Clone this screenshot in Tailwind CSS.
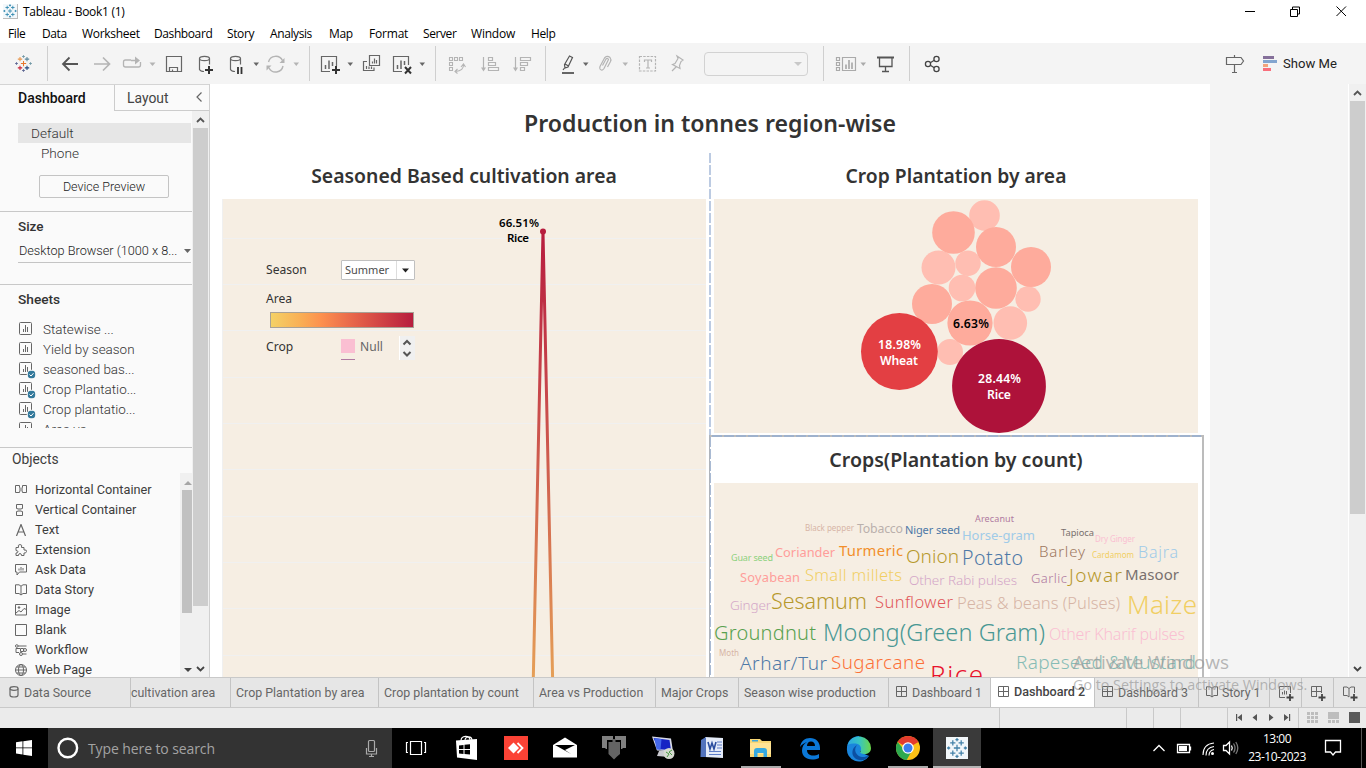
<!DOCTYPE html>
<html lang="en">
<head>
<meta charset="utf-8">
<title>Tableau - Book1 (1)</title>
<script src="https://cdn.jsdelivr.net/npm/@tailwindcss/browser@4"></script>
</head>
<body class="w-[1366px] h-[768px] overflow-hidden bg-white relative font-['Roboto',sans-serif] text-[#4b4b4b] whitespace-nowrap">
<svg class="hidden">
  <symbol id="tableau" viewBox="0 0 24 24"><g fill="none" stroke-width="1.2">
    <path d="M12 9v6M9 12h6" stroke="var(--c1,#e8762d)"/><path d="M8 4.500v5M5.500 7h5" stroke="var(--c2,#e8974e)"/><path d="M16 4.500v5M13.500 7h5" stroke="var(--c3,#5b879b)"/><path d="M8 14.500v5M5.500 17h5" stroke="var(--c4,#c72035)"/><path d="M16 14.500v5M13.500 17h5" stroke="var(--c5,#1f447e)"/><path d="M12 2.500v3M10.500 4h3M20 10.500v3M18.500 12h3" stroke="var(--c6,#7199a6)"/><path d="M12 18.500v3M10.500 20h3M4 10.500v3M2.500 12h3" stroke="var(--c7,#5c6692)"/></g></symbol>
  <symbol id="sheet" viewBox="0 0 16 16"><rect x="1.500" y="1.500" width="12" height="12" rx="1" fill="none" stroke="#666" /><path d="M5.500 11V8M7.500 11V4M9.500 11V6" stroke="#666" fill="none"/></symbol>
  <symbol id="check" viewBox="0 0 8 8"><circle cx="4" cy="4" r="3.900" fill="#33799b"/><path d="M2 4l1.500 1.500L6 2.700" stroke="#fff" fill="none"/></symbol>
  <symbol id="grid4" viewBox="0 0 12 12"><path d="M.5.500h10v10H.5zM5.500.500v10M.5 5.500h10" fill="none" stroke="#666"/></symbol>
  <symbol id="book" viewBox="0 0 12 12"><path d="M6 2.200L4 .800H.5V9.500H4L6 11 8 9.500h3.500V.800H8L6 2.200V11" fill="none" stroke="#666"/></symbol>
</svg>

<header class="h-[23px] flex items-center pl-[3px] text-black font-['Open_Sans',sans-serif] text-[12px]">
  <div class="w-[15px] h-[15px] border-r border-b border-[#bbb] bg-[#f3f8fb]">
    <svg class="w-[14px] h-[14px] [--c1:#2d85ad] [--c2:#2d85ad] [--c3:#2d85ad] [--c4:#2d85ad] [--c5:#2d85ad] [--c6:#2d85ad] [--c7:#2d85ad]" viewBox="2 2 20 20"><use href="#tableau" width="24" height="24"/></svg>
  </div>
  <span class="ml-[5px] tracking-[-0.28px]">Tableau - Book1 (1)</span>
  <svg class="ml-auto mr-[18px] w-[104px] h-[20px]" viewBox="1244 0 104 20" fill="none" stroke="#000"><path d="M1245 9.500h10M1290.500 7.500h7v7h-7zM1292.500 7.500v-2.500h7v7h-2M1336.500 4.500l9.500 9.500M1346 4.500l-9.500 9.500"/></svg>
</header>

<nav class="h-[20px] flex items-center pl-2 text-black font-['Open_Sans',sans-serif] text-[12px] leading-[20px] tracking-[-0.4px] pt-[2px]">
  <span class="w-[34px]">File</span><span class="w-[40px]">Data</span><span class="w-[72px] tracking-[-0.3px]">Worksheet</span><span class="w-[73px]">Dashboard</span><span class="w-[43px]">Story</span><span class="w-[59px]">Analysis</span><span class="w-[40px]">Map</span><span class="w-[54px] tracking-[-0.2px]">Format</span><span class="w-[48px]">Server</span><span class="w-[60px] tracking-[-0.2px]">Window</span><span>Help</span>
</nav>

<div class="h-[41px] flex items-center bg-[#f4f4f4] overflow-hidden">
  <svg class="w-[47px] h-[41px]" viewBox="0 43 47 41"><use href="#tableau" x="13" y="53" width="21" height="21"/></svg>
  <i class="w-px h-[35px] bg-[#cfcfcf]"></i>
  <svg class="w-[40px] h-[41px]" viewBox="48 43 40 41" fill="none" stroke="#555" stroke-width="1.800"><path d="M78 64H63M69.500 57.500L63 64l6.500 6.500"/></svg>
  <svg class="w-[30px] h-[41px]" viewBox="88 43 30 41" fill="none" stroke="#b4b4b4" stroke-width="1.700"><path d="M94 64h15.500M103 57.500l6.500 6.500-6.500 6.500"/></svg>
  <svg class="w-[42px] h-[41px]" viewBox="118 43 42 41" fill="none" stroke="#b4b4b4" stroke-width="1.300"><path d="M131 60h-5.500a2 2 0 0 0-2 2v3a2 2 0 0 0 2 2h13a2 2 0 0 0 2-2v-3M131 60.500h6"/><path d="M135 56.500l5 4-5 4z" fill="#b4b4b4" stroke="none"/><path d="M149.500 62.500h6l-3 3.500z" fill="#b4b4b4" stroke="none"/></svg>
  <svg class="w-[30px] h-[41px]" viewBox="160 43 30 41" fill="none" stroke="#666" stroke-width="1.200"><path d="M166.500 56.500h15v15h-15zM169.500 71.500v-4h8v4M172.500 71.500v-2" /></svg>
  <svg class="w-[32px] h-[41px]" viewBox="190 43 32 41" fill="none" stroke="#666" stroke-width="1.200"><ellipse cx="204.500" cy="58.500" rx="5" ry="2.200"/><path d="M199.500 58.500v11q1 2 4.500 2M209.500 58.500v6"/><path d="M209 66v8M205 70h8" stroke="#333" stroke-width="2"/></svg>
  <svg class="w-[40px] h-[41px]" viewBox="222 43 40 41" fill="none" stroke="#666" stroke-width="1.200"><ellipse cx="235.500" cy="58.500" rx="5" ry="2.200"/><path d="M230.500 58.500v11q1 2 4.500 2M240.500 58.500v6"/><path d="M238 67v7M241.500 67v7" stroke="#333" stroke-width="1.800"/><path d="M253.500 62.500h5.500l-2.700 3.500z" fill="#666" stroke="none"/></svg>
  <svg class="w-[47px] h-[41px]" viewBox="262 43 47 41" fill="none" stroke="#b4b4b4" stroke-width="1.400"><path d="M268.500 62a7.500 7.500 0 0 1 14-1.500M283 66a7.500 7.500 0 0 1-14 2"/><path d="M284.500 58v5h-5zM266.500 70.500v-5h5z" fill="#b4b4b4" stroke="none"/><path d="M293.500 62.500h5.500l-2.700 3.500z" fill="#b4b4b4" stroke="none"/></svg>
  <i class="w-px h-[35px] bg-[#cfcfcf]"></i>
  <svg class="w-[46px] h-[41px]" viewBox="310 43 46 41" fill="none" stroke="#666" stroke-width="1.200"><path d="M330 71.500h-8.500v-15h15V66"/><path d="M325.500 69v-4M329 69V60.500M332.500 66v-4" stroke-width="1.500"/><path d="M336 66v8M332 70h8" stroke="#333" stroke-width="2"/><path d="M347.500 62.500h5.500l-2.700 3.500z" fill="#666" stroke="none"/></svg>
  <svg class="w-[32px] h-[41px]" viewBox="356 43 32 41" fill="none" stroke="#666" stroke-width="1.200"><path d="M369.500 55.500h10v10h-10zM367 61.500h-3.500v9h10.500V67.500M366.500 69v-3M369 69v-2.500M371.500 69v-2.500M372.500 63.500v-2M374.500 63.500v-5M376.500 63.500v-3.500"/></svg>
  <svg class="w-[47px] h-[41px]" viewBox="388 43 47 41" fill="none" stroke="#666" stroke-width="1.200"><path d="M402 71.500h-8.500v-15h15V65"/><path d="M397.500 69v-4M401 69V60.500M404.500 65v-4" stroke-width="1.500"/><path d="M405 67l6 6.500M411 67l-6 6.500" stroke="#333" stroke-width="2"/><path d="M419.500 62.500h5.500l-2.700 3.500z" fill="#666" stroke="none"/></svg>
  <i class="w-px h-[35px] bg-[#cfcfcf]"></i>
  <svg class="w-[36px] h-[41px]" viewBox="436 43 36 41" fill="none" stroke="#b4b4b4" stroke-width="1.100"><path d="M449.500 57.500h3v3h-3zM454.500 57.500h3v3h-3zM459.500 57.500h3v3h-3zM449.500 62.500h3v3h-3zM449.500 67.500h3v3h-3zM463.500 64q.5 7-8 7.500M461 67l2.500-3 2 3M457.500 69l-2.500 2.500 2.500 2"/></svg>
  <svg class="w-[34px] h-[41px]" viewBox="472 43 34 41" fill="none" stroke="#b4b4b4" stroke-width="1.200"><path d="M483.500 57v13M488.500 57.500h4v3h-4zM488.500 62.500h7v3h-7zM488.500 67.500h10v3h-10z"/><path d="M481 67.500h5l-2.500 4z" fill="#b4b4b4" stroke="none"/></svg>
  <svg class="w-[39px] h-[41px]" viewBox="506 43 39 41" fill="none" stroke="#b4b4b4" stroke-width="1.200"><path d="M515.500 57v13M520.500 57.500h10v3h-10zM520.500 62.500h7v3h-7zM520.500 67.500h4v3h-4z"/><path d="M513 67.500h5l-2.500 4z" fill="#b4b4b4" stroke="none"/></svg>
  <i class="w-px h-[35px] bg-[#cfcfcf]"></i>
  <svg class="w-[46px] h-[41px]" viewBox="546 43 46 41" fill="none" stroke="#555" stroke-width="1.200"><path d="M569.500 56l3 1.500-4.500 9.500-3 1-.5-3.500zM565 64l3.500 2M564.500 68l-1.500 2"/><path d="M562 73h12" stroke-width="1.800"/><path d="M583 62.500h5.500l-2.700 3.500z" fill="#666" stroke="none"/></svg>
  <svg class="w-[40px] h-[41px]" viewBox="592 43 40 41" fill="none" stroke="#b4b4b4" stroke-width="1.200"><path d="M602.500 65.500l3.500-6.500q1.500-1.500 2.500.5l-4.500 9q-2 3-4 .5-.5-1 0-2.500l4.500-8.500q2.500-3 5.500-.5 1.500 2 .5 4l-3 5.500"/><path d="M622.500 62.500h5.500l-2.700 3.500z" fill="#b4b4b4" stroke="none"/></svg>
  <svg class="w-[32px] h-[41px]" viewBox="632 43 32 41" fill="none" stroke="#b4b4b4" stroke-width="1.200"><rect x="639.500" y="56.500" width="16" height="14.500" stroke-dasharray="2.500 1.200"/><path d="M644.500 62v-2h7v2M648 60v8M646 68h4"/></svg>
  <svg class="w-[40px] h-[41px]" viewBox="664 43 40 41" fill="none" stroke="#b4b4b4" stroke-width="1.200"><path d="M677 56l6 4-2 1.500-1.500 4 .5 3-7.500-4 2.500-1 3-5zM676 67l-4 4"/></svg>
  <div class="w-[104px] h-[24px] border border-[#d2d2d2] rounded-sm flex items-center justify-end pr-[5px]"><svg class="w-2 h-1" viewBox="0 0 8 4"><path d="M0 0h8L4 4z" fill="#c8c8c8"/></svg></div>
  <i class="w-px h-[35px] ml-[15px] bg-[#cfcfcf]"></i>
  <svg class="w-[46px] h-[41px]" viewBox="824 43 46 41" fill="none" stroke="#aaa" stroke-width="1.200"><path d="M836.500 57.500h3v3h-3zM836.500 62.500h3v3h-3zM836.500 67.500h3v3h-3zM842.500 57.500h13v13h-13z"/><path d="M846 69v-4.500M849 69v-9M852 69v-6.500" stroke-width="1.700"/><path d="M860.500 62.500h5.500l-2.700 3.500z" fill="#aaa" stroke="none"/></svg>
  <svg class="w-[39px] h-[41px]" viewBox="870 43 39 41" fill="none" stroke="#555" stroke-width="1.300"><path d="M877 57.500h17" stroke-width="2"/><path d="M879.500 58v8.500h12.500V58M885.500 66.500V71M882 71.500h7"/></svg>
  <i class="w-px h-[35px] bg-[#cfcfcf]"></i>
  <svg class="w-[40px] h-[41px]" viewBox="910 43 40 41" fill="none" stroke="#444" stroke-width="1.300"><circle cx="928" cy="64" r="2.600"/><circle cx="936.500" cy="59" r="2.600"/><circle cx="936.500" cy="69" r="2.600"/><path d="M930.300 62.700l4-2.400M930.300 65.300l4 2.400"/></svg>
  <svg class="ml-auto w-[38px] h-[41px]" viewBox="1219 43 38 41" fill="none" stroke="#666" stroke-width="1.200"><path d="M1226.500 57.500h14.500l2.500 3.500-2.500 3.500h-14.500zM1234.500 55v2.500M1234.500 64.500V72M1232 72.500h5"/></svg>
  <svg class="w-[26px] h-[41px]" viewBox="1257 43 26 41"><path d="M1263 56h11v3h-11z" fill="#85709a"/><path d="M1263 60h14v3h-14z" fill="#83a5cf"/><path d="M1263 64h5v3h-5z" fill="#f2a47c"/><path d="M1263 68h8v3h-8z" fill="#f96f7c"/></svg>
  <span class="w-[83px] text-[13.100px] text-[#222]">Show Me</span>
</div>

<main class="h-[593px] flex">
  <aside class="w-[210px] h-full bg-[#fafafa] border-r border-[#d0d0d0] overflow-hidden flex flex-col">
    <div class="h-[27px] flex shrink-0 border-t border-[#d4d4d4]">
      <div class="w-[114px] pl-[18px] text-[14px] leading-[26px] font-medium text-[#111]">Dashboard</div>
      <div class="flex-1 border-l border-b border-[#ccc] pl-3 text-[13.900px] leading-[26px] text-[#444] flex">Layout
        <svg class="ml-auto mr-[6px] mt-[6px] w-2 h-3" viewBox="0 0 8 12"><path d="M6.500 1.500L2 6l4.500 4.500" fill="none" stroke="#666" stroke-width="1.200"/></svg></div>
    </div>
    <div class="flex-1 min-h-0 flex">
      <div class="w-[192px] flex flex-col">
        <div class="mt-3 ml-[18px] w-[173px] h-5 bg-[#e6e6e6] pl-[13px] text-[13.600px] leading-[20px] font-light text-[#333]">Default</div>
        <div class="ml-[41px] text-[13.600px] h-[20px] leading-[20px] font-light text-[#333]">Phone</div>
        <div class="mt-3 ml-[39px] w-[130px] h-[23px] border border-[#c4c4c4] rounded-[2px] text-center text-[12.500px] leading-[21px] font-light text-[#222]">Device Preview</div>
        <div class="mt-[13px] h-[73px] border-t border-[#c8c8c8] pl-[18px]">
          <div class="mt-[4px] text-[13.500px] leading-[20px] font-medium text-[#333] h-[20px]">Size</div>
          <div class="mt-[2px] w-[173px] h-[25px] border-b border-[#c4c4c4] flex items-center pl-px pt-[2px] text-[12.700px] font-light text-[#222]">Desktop Browser (1000 x 8...<svg class="ml-auto w-[7px] h-1" viewBox="0 0 7 4"><path d="M0 0h7L3.500 4z" fill="#666"/></svg></div>
        </div>
        <div class="h-[163px] border-t border-[#c8c8c8] pl-[18px]">
          <div class="mt-1 text-[13.700px] leading-[20px] h-[20px] font-medium text-[#333]">Sheets</div>
          <div class="mt-[9px] h-[110px] overflow-hidden text-[13.450px] leading-[23px] font-light text-[#333]">
            <div class="h-5 flex gap-[9px]"><svg class="w-4 h-4 mt-[3px]"><use href="#sheet"/></svg>Statewise ...</div>
            <div class="h-5 flex gap-[9px]"><svg class="w-4 h-4 mt-[3px]"><use href="#sheet"/></svg>Yield by season</div>
            <div class="h-5 flex gap-[9px]"><svg class="w-4 h-[18px] mt-[3px] overflow-visible"><use href="#sheet" width="16" height="16"/><circle cx="13.500" cy="13.500" r="4.700" fill="#fafafa"/><use href="#check" x="9.500" y="9.500" width="8" height="8"/></svg>seasoned bas...</div>
            <div class="h-5 flex gap-[9px]"><svg class="w-4 h-[18px] mt-[3px] overflow-visible"><use href="#sheet" width="16" height="16"/><circle cx="13.500" cy="13.500" r="4.700" fill="#fafafa"/><use href="#check" x="9.500" y="9.500" width="8" height="8"/></svg>Crop Plantatio...</div>
            <div class="h-5 flex gap-[9px]"><svg class="w-4 h-[18px] mt-[3px] overflow-visible"><use href="#sheet" width="16" height="16"/><circle cx="13.500" cy="13.500" r="4.700" fill="#fafafa"/><use href="#check" x="9.500" y="9.500" width="8" height="8"/></svg>Crop plantatio...</div>
            <div class="h-5 flex gap-[9px]"><svg class="w-4 h-4 mt-[3px]"><use href="#sheet"/></svg>Area vs ...</div>
          </div>
        </div>
        <div class="flex-1 min-h-0 border-t border-[#c8c8c8] flex">
          <div class="w-[180px] text-[12.750px] leading-[20px] text-[#3d3d3d]">
            <div class="pl-3 mt-[1px] h-[20px] text-[13.800px]">Objects</div>
            <div class="mt-[11px] pl-[15px]">
              <div class="h-5 flex items-center gap-2"><svg class="w-3 h-3" fill="none" stroke="#666"><path d="M.5 1.500h4v7h-4zM7.500 1.500h4v7h-4z"/><path d="M4 3.500h4v4H4z" fill="#aaa" stroke="none"/></svg>Horizontal Container</div>
              <div class="h-5 flex items-center gap-2"><svg class="w-3 h-3" fill="none" stroke="#666"><path d="M1.500.500h6v4h-6zM1.500 7.500h6v4h-6z"/><path d="M2.500 4h4v4h-4z" fill="#aaa" stroke="none"/></svg>Vertical Container</div>
              <div class="h-5 flex items-center gap-2"><svg class="w-3 h-3" fill="none" stroke="#666" stroke-width="1.200"><path d="M1.500 12L6 .500 10.500 12M3 8h6"/></svg>Text</div>
              <div class="h-5 flex items-center gap-2"><svg class="w-3 h-3" fill="none" stroke="#666"><path d="M1 3.500h2.500q-1-3 1.500-3t1.500 3H9v2.500q3-.5 2.500 1.500T9 9v2.500H6.500q0-2-1.500-2t-1.500 2H1V9q2 0 2-1.200T1 6.500z"/></svg>Extension</div>
              <div class="h-5 flex items-center gap-2"><svg class="w-3 h-3" fill="none" stroke="#666"><path d="M.5.500h11v7.500h-7l-2.500 3V8H.5z"/><path d="M4 6.500V4.500M6 6.500V3M8 6.500V4" /></svg>Ask Data</div>
              <div class="h-5 flex items-center gap-2"><svg class="w-3 h-3"><use href="#book"/></svg>Data Story</div>
              <div class="h-5 flex items-center gap-2"><svg class="w-3 h-3" fill="none" stroke="#666"><path d="M.5.500h11v10.500H.5zM1 9l3-2.500 2 1.500L9 4.500l2.500 1"/><circle cx="4" cy="3.500" r=".8" fill="#666"/></svg>Image</div>
              <div class="h-5 flex items-center gap-2"><svg class="w-3 h-3" fill="none" stroke="#666"><path d="M.5.500h11v11H.5z"/></svg>Blank</div>
              <div class="h-5 flex items-center gap-2"><svg class="w-3 h-3" fill="none" stroke="#666"><circle cx="1.800" cy="2" r="1.300"/><circle cx="10" cy="6" r="1.500"/><circle cx="6" cy="10" r="1.500"/><path d="M3 2h8.500M5 4.500H1v4h3M5.500 4.500h3v3h-3zM8 10h3.500"/></svg>Workflow</div>
              <div class="h-5 flex items-center gap-2"><svg class="w-3 h-3" fill="none" stroke="#666"><circle cx="6" cy="6" r="5.500"/><ellipse cx="6" cy="6" rx="2.500" ry="5.500"/><path d="M.5 6h11M1.500 3h9M1.500 9h9"/></svg>Web Page</div>
            </div>
          </div>
          <div class="mt-[25px] w-3 bg-[#f0f0f0] pt-[17px] pl-[2px] relative">
            <svg class="absolute left-[4px] top-[8px] w-2 h-1"><path d="M0 4h8L4 0z" fill="#a5a5a5"/></svg>
            <div class="h-[123px] w-[10px] bg-[#c1c1c1]"></div>
            <svg class="mt-[55px] ml-[2px] w-2 h-1"><path d="M0 0h8L4 4z" fill="#444"/></svg>
          </div>
        </div>
      </div>
      <div class="w-[17px] pl-px bg-[#f0f0f0] flex flex-col">
        <svg class="w-4 h-[17px]" fill="none" stroke="#555" stroke-width="1.800"><path d="M4 11l3.500-3.500L11 11"/></svg>
        <div class="w-[15px] h-[478px] bg-[#cdcdcd]"></div>
        <svg class="mt-auto w-4 h-[17px]" fill="none" stroke="#444" stroke-width="1.800"><path d="M4 7l3.500 3.500L11 7"/></svg>
      </div>
    </div>
  </aside>

  <section class="w-[1000px] h-full bg-white flex flex-col font-['Noto_Sans',sans-serif] overflow-hidden">
    <h1 class="h-[69px] pt-[22px] text-center text-[23.100px] leading-[34px] font-semibold text-[#333] shrink-0">Production in tonnes region-wise</h1>
    <div class="flex h-[524px]">
      <div class="w-[499px] pl-3 relative">
        <h2 class="w-[484px] h-[46px] text-center text-[19.400px] leading-[46px] font-semibold text-[#333]">Seasoned Based cultivation area</h2>
        <svg class="w-[484px] h-[478px] bg-[#f6eee3]" viewBox="222 199 484 478">
          <defs><linearGradient id="lg" gradientUnits="userSpaceOnUse" x1="0" y1="231" x2="0" y2="677"><stop offset="0" stop-color="#b71d3e"/><stop offset=".33" stop-color="#c6424a"/><stop offset="1" stop-color="#e59f57"/></linearGradient></defs>
          <path d="M222 238.500h484M222 284.500h484M222 330.500h484M222 377.500h484M222 423.500h484M222 469.500h484M222 516.500h484M222 562.500h484M222 608.500h484M222 655.500h484M222.500 199v478" stroke="#f0f0f0"/>
          <path d="M533.300 678L543 231.500 552.600 678" fill="none" stroke="url(#lg)" stroke-width="3" stroke-linejoin="bevel"/>
          <circle cx="543" cy="231.500" r="3" fill="#b71d3e"/>
          <g font-size="11.500" font-weight="600" fill="#000"><text x="499" y="227" textLength="40">66.51%</text><text x="507" y="242" textLength="22">Rice</text></g>
        </svg>
        <div class="absolute left-[56px] top-[107px] w-[150px] text-[12.100px] leading-[20px] text-[#333]">
          <div class="flex h-[20px]"><span class="w-[75px] leading-[19px]">Season</span>
            <div class="w-[74px] h-[20px] bg-white border border-[#c0c0c0] rounded-[1px] flex text-[11px] text-[#4b4b4b] leading-[18px]"><span class="w-[55px] pl-[3px] border-r border-[#ddd]">Summer</span><svg class="w-[17px] h-[18px]"><path d="M5 7.500h7l-3.500 4z" fill="#222"/></svg></div></div>
          <div class="mt-[9px] h-5 leading-[20px]">Area</div>
          <div class="mt-[3px] ml-1 w-[144px] h-4 border border-[#a8a196] bg-[linear-gradient(90deg,#f4d166,#f9b055_20%,#fd914e_35%,#e7654a_58%,#cc3c43_82%,#b71d3e)]"></div>
          <div class="mt-[6px] flex h-[27px]"><span class="w-[75px] leading-[26px]">Crop</span>
            <div class="w-[58px] flex"><div class="pt-[5px]"><div class="w-[14px] h-[14px] bg-[#fabfd2]"></div><div class="mt-[6px] w-[14px] h-px bg-[#b07aa1]"></div></div><span class="pl-[5px] leading-[26px] text-[#666]">Null</span></div>
            <div class="w-[16px] h-[24px] mt-[2px] bg-[#f0f0f0] border-l border-white"><svg class="w-[15px] h-[24px]" fill="none" stroke="#555" stroke-width="2"><path d="M3.500 8.500L7 5l3.500 3.500M3.500 16L7 19.500l3.500-3.500"/></svg></div>
          </div>
        </div>
      </div>
      <div class="w-[501px] flex flex-col">
        <div class="h-[282px] flex">
          <svg class="w-[5px] h-[282px]" viewBox="709 153 5 282"><path d="M710 153v282" stroke="#bccbe2" stroke-width="2" stroke-dasharray="10 2"/></svg>
          <div class="w-[484px]">
            <h2 class="h-[46px] text-center text-[19.300px] leading-[46px] font-semibold text-[#333]">Crop Plantation by area</h2>
            <svg class="w-[484px] h-[234px] bg-[#f6eee3]" viewBox="714 199 484 234">
              <g fill="#ffbeb2"><circle cx="984.500" cy="215.500" r="15.300"/><circle cx="938.500" cy="267.500" r="17"/><circle cx="968" cy="263.300" r="12.700"/><circle cx="962" cy="288" r="13.300"/><circle cx="1028" cy="299" r="12.700"/><circle cx="1010.300" cy="323" r="16.800"/><circle cx="950" cy="352" r="13"/></g>
              <g fill="#feab9c"><circle cx="953.500" cy="232.500" r="21.300"/><circle cx="996" cy="247" r="20"/><circle cx="1031" cy="267" r="20"/><circle cx="996" cy="288" r="20.800"/><circle cx="932" cy="304" r="20"/><circle cx="970" cy="323" r="22.600"/></g>
              <circle cx="899.400" cy="351.500" r="38.400" fill="#e33f43"/><circle cx="999" cy="386" r="46.900" fill="#ae123a"/>
              <g font-size="12.200" font-weight="600" fill="#fff"><text x="953" y="328" textLength="36" fill="#000">6.63%</text><text x="878" y="349" textLength="43">18.98%</text><text x="880" y="365" textLength="38">Wheat</text><text x="978" y="383" textLength="43">28.44%</text><text x="987" y="399" textLength="24">Rice</text></g>
            </svg>
          </div>
        </div>
        <div class="w-[495px] h-[242px] border-t-2 border-r-2 border-[#bcbcbc] flex">
          <svg class="w-[5px] h-[240px] overflow-visible" viewBox="709 437 5 240"><path d="M709.500 435v242" stroke="#b0b4ba" /><path d="M710.500 437v240" stroke="#a9bad3" stroke-dasharray="10 2"/><path d="M712 436h489" stroke="#9fb2cd" stroke-width="2" stroke-dasharray="10 2"/></svg>
          <div class="w-[484px]">
            <h2 class="h-[46px] text-center text-[19.550px] leading-[46px] font-semibold text-[#333]">Crops(Plantation by count)</h2>
            <svg class="w-[484px] h-[194px] bg-[#f6eee3] font-light" viewBox="714 483 484 194">
              <g fill="#b07aa1"><text x="975" y="522" textLength="39" font-size="9" font-weight="400">Arecanut</text><text x="1031" y="583" textLength="36" font-size="13">Garlic</text></g>
              <g fill="#d7b5a6"><text x="805" y="531" textLength="49" font-size="8" font-weight="400">Black pepper</text><text x="719" y="656" textLength="20" font-size="8" font-weight="400">Moth</text><text x="957" y="609" textLength="163" font-size="16.500">Peas &amp; beans (Pulses)</text></g>
              <text x="857" y="533" textLength="46" font-size="12.300" fill="#bab0ac" font-weight="400">Tobacco</text>
              <g fill="#4e79a7"><text x="905" y="534" textLength="55" font-size="11" font-weight="400">Niger seed</text><text x="962" y="565" textLength="61" font-size="19.500">Potato</text><text x="740" y="670" textLength="87" font-size="19">Arhar/Tur</text></g>
              <g fill="#a0cbe8"><text x="962" y="540" textLength="73" font-size="13" font-weight="400">Horse-gram</text><text x="1138" y="558" textLength="40" font-size="16">Bajra</text></g>
              <g fill="#79706e"><text x="1061" y="536" textLength="33" font-size="9.300" font-weight="400">Tapioca</text><text x="1125" y="580" textLength="54" font-size="15" font-weight="400">Masoor</text></g>
              <g fill="#fabfd2"><text x="1095" y="542" textLength="40" font-size="8" font-weight="400">Dry Ginger</text><text x="1049" y="640" textLength="136" font-size="16">Other Kharif pulses</text></g>
              <text x="731" y="561" textLength="42" font-size="9" fill="#8cd17d" font-weight="400">Guar seed</text>
              <g fill="#ff9d9a" font-weight="400"><text x="775" y="557" textLength="60" font-size="12.800">Coriander</text><text x="740" y="582" textLength="60" font-size="12.800">Soyabean</text></g>
              <text x="839" y="556" textLength="64" font-size="14.800" fill="#f28e2b" font-weight="400">Turmeric</text>
              <g fill="#b6992d"><text x="906" y="563" textLength="53" font-size="19">Onion</text><text x="1069" y="582" textLength="53" font-size="19">Jowar</text><text x="771" y="609" textLength="96" font-size="21.500">Sesamum</text></g>
              <text x="1039" y="557" textLength="46" font-size="15" fill="#9d7660">Barley</text>
              <g fill="#f1ce63"><text x="1092" y="558" textLength="42" font-size="8" font-weight="400">Cardamom</text><text x="805" y="581" textLength="97" font-size="16.500">Small millets</text><text x="1127" y="614" textLength="70" font-size="26">Maize</text></g>
              <g fill="#d4a6c8"><text x="909" y="585" textLength="108" font-size="13.500">Other Rabi pulses</text><text x="730" y="610" textLength="41" font-size="13.500">Ginger</text></g>
              <text x="875" y="608" textLength="78" font-size="16.500" fill="#e15759">Sunflower</text>
              <text x="714" y="640" textLength="102" font-size="20" fill="#59a14f">Groundnut</text>
              <text x="823" y="641" textLength="222" font-size="23.500" fill="#499894">Moong(Green Gram)</text>
              <text x="831" y="669" textLength="94" font-size="18.800" fill="#fc7138">Sugarcane</text>
              <text x="930" y="684" textLength="53" font-size="26" fill="#e8112d">Rice</text>
              <text x="1016" y="669" textLength="180" font-size="19" fill="#86bcb6">Rapeseed &amp;Mustard</text>
            </svg>
          </div>
        </div>
      </div>
    </div>
  </section>

  <div class="flex-1 bg-[#f4f4f4]"></div>
  <div class="w-[18px] bg-[#f0f0f0] border-l border-white flex flex-col pl-px">
    <svg class="w-4 h-[17px]" fill="none" stroke="#555" stroke-width="1.800"><path d="M4 11l3.500-3.500L11 11"/></svg>
    <div class="w-[15px] h-[413px] bg-[#cdcdcd]"></div>
    <svg class="mt-auto w-4 h-[17px]" fill="none" stroke="#444" stroke-width="1.800"><path d="M4 7l3.500 3.500L11 7"/></svg>
  </div>
</main>

<div class="h-[31px] flex bg-[#e6e6e6] border-t border-b border-[#c9c9c9] text-[12.400px] leading-[30px] text-[#666]">
  <div class="w-[131px] border-r border-[#c4c4c4] flex pl-[9px]"><svg class="w-[10px] h-3 mt-2 mr-[5px]" fill="none" stroke="#666" stroke-width="1.200"><ellipse cx="5" cy="2.500" rx="4" ry="1.800"/><path d="M1 2.500V9q0 2 4 2t4-2V2.500"/></svg>Data Source</div>
  <div class="w-[100px] border-r border-[#c4c4c4]">cultivation area</div>
  <div class="w-[148px] border-r border-[#c4c4c4] pl-[5px]">Crop Plantation by area</div>
  <div class="w-[155px] border-r border-[#c4c4c4] pl-[5px]">Crop plantation by count</div>
  <div class="w-[122px] border-r border-[#c4c4c4] pl-[5px]">Area vs Production</div>
  <div class="w-[83px] border-r border-[#c4c4c4] pl-[5px]">Major Crops</div>
  <div class="w-[150px] border-r border-[#c4c4c4] pl-[5px]">Season wise production</div>
  <div class="w-[102px] border-r border-[#c4c4c4] pl-[7px] flex"><svg class="w-3 h-3 mt-2 mr-1"><use href="#grid4"/></svg>Dashboard 1</div>
  <div class="w-[104px] border-r border-[#c4c4c4] pl-[7px] flex bg-white font-medium text-[#444] text-[12.600px] leading-[27px]"><svg class="w-3 h-3 mt-2 mr-1"><use href="#grid4"/></svg>Dashboard 2</div>
  <div class="w-[104px] border-r border-[#c4c4c4] pl-[7px] flex"><svg class="w-3 h-3 mt-2 mr-1"><use href="#grid4"/></svg>Dashboard 3</div>
  <div class="w-[71px] border-r border-[#c4c4c4] pl-[7px] flex"><svg class="w-3 h-3 mt-2 mr-1"><use href="#book"/></svg>Story 1</div>
  <div class="w-8 border-r border-[#c4c4c4] pl-[9px]"><svg class="w-4 h-4 mt-2" fill="none" stroke="#666"><path d="M6 11.500H.5V.500h11V7M3.500 8.500V6M5.500 8.500v-4M7.500 8.500V5"/><path d="M11 8v7M7.500 11.500h7" stroke="#444" stroke-width="1.800"/></svg></div>
  <div class="w-8 border-r border-[#c4c4c4] pl-[9px]"><svg class="w-4 h-4 mt-2" fill="none" stroke="#666"><path d="M6 10.500H.5V.500h10V7M5.500.500v10M.5 5.500h10"/><path d="M11 8v7M7.500 11.500h7" stroke="#444" stroke-width="1.800"/></svg></div>
  <div class="w-8 pl-[9px]"><svg class="w-4 h-4 mt-2" fill="none" stroke="#666"><path d="M6 11L4 9.500H.5V1H4l2 1.500L8 1h3.500v6M6 2.500V11"/><path d="M11 8v7M7.500 11.500h7" stroke="#444" stroke-width="1.800"/></svg></div>
</div>

<div class="h-[20px] bg-[#ebebeb] flex">
  <div class="w-[1000px] border-r border-[#c9c9c9]"></div><div class="w-[127px] border-r border-[#c9c9c9]"></div><div class="w-[27px] border-r border-[#c9c9c9]"></div><div class="w-[27px] border-r border-[#c9c9c9]"></div><div class="w-[47px] border-r border-[#c9c9c9]"></div>
  <svg class="w-[70px] h-5" viewBox="1228 708 70 20" fill="#555"><path d="M1236 714h1.200v7H1236zM1242 714v7l-4.500-3.500zM1257 714v7l-4.500-3.500zM1269 714v7l4.500-3.500zM1284 714v7l4.500-3.500zM1289 714h1.200v7H1289z"/></svg>
  <svg class="w-[68px] h-5 border-l border-[#c9c9c9]" viewBox="1299 708 67 20" fill="#bdbdbd"><path d="M1307 712h3v3h-3zM1311 712h3v3h-3zM1315 712h3v3h-3zM1307 716h3v3h-3zM1311 716h3v3h-3zM1315 716h3v3h-3zM1307 720h3v3h-3zM1311 720h3v3h-3zM1315 720h3v3h-3zM1328 712h11v7h-11zM1328 720h3v3h-3zM1332 720h3v3h-3zM1336 720h3v3h-3z"/><path d="M1349 712h11v11h-11z" fill="#5a5a5a"/></svg>
</div>

<footer class="h-10 bg-black flex items-center overflow-hidden font-['Open_Sans',sans-serif]">
  <svg class="w-12 h-10" viewBox="0 728 48 40" fill="#fff"><path d="M16 742.200l6.500-.9v6.200H16zM23.300 741.200l8.700-1.200v7.500h-8.700zM16 748.300h6.500v6.200l-6.500-.9zM23.300 748.300H32v7.700l-8.700-1.200z"/></svg>
  <div class="w-[344px] h-full bg-[#333] flex items-center">
    <svg class="w-10 h-10" viewBox="48 728 40 40" fill="none" stroke="#fff" stroke-width="2.400"><circle cx="67.800" cy="748" r="9.300"/></svg>
    <span class="text-[14px] tracking-[-0.1px] text-[#a3a3a3]">Type here to search</span>
    <svg class="ml-auto w-10 h-10" viewBox="352 728 40 40" fill="none" stroke="#aaa" stroke-width="1.200"><rect x="368.500" y="740.500" width="6" height="11" rx="1"/><path d="M366.500 748v6h10v-6M371.500 754v2.500M369 756.500h5"/></svg>
  </div>
  <svg class="w-[50px] h-10" viewBox="392 728 50 40" fill="none" stroke="#fff" stroke-width="1.200"><path d="M410.500 741.500h11v13h-11zM408 742.500h-1.500v10h1.500M424 742.500h1.500v10H424"/></svg>
  <svg class="w-[49px] h-10" viewBox="442 728 49 40"><path d="M456 740.500l21-1.500v21l-20-2.500z" fill="#fff"/><path d="M461 741c0-6 9-6 9-1M465 740.500c0-5 7-4.500 7 0" stroke="#fff" fill="none" stroke-width="1.200"/><path d="M459 745.500l4.500-.5v4H459zM464.500 744.800l5.500-.5v4.700h-5.500zM459 750h4.500v4l-4.500-.4zM464.500 750h5.500v4.600l-5.500-.5z" fill="#000"/></svg>
  <svg class="w-[49px] h-10" viewBox="491 728 49 40"><path d="M504 736h24v24h-24z" fill="#fb4235"/><path d="M513.500 742.500l5.500 5.500-5.500 5.500L508 748z" fill="#fff"/><path d="M517.500 743l5 5-5 5" fill="none" stroke="#fff" stroke-width="1.800"/></svg>
  <svg class="w-[49px] h-10" viewBox="540 728 49 40"><path d="M553 745l12-7.500 12 7.500v12.500h-24z" fill="#fff"/><path d="M555 745h20l-10 5 6 4-16-9z" fill="#000"/></svg>
  <svg class="w-[49px] h-10" viewBox="589 728 49 40"><path d="M602 736h11v4h-6v9h-1.500v-1H602zM626 736h-11v4h6v9h1.500v-1h3.500z" fill="#808080"/><path d="M608.500 742h4v-3h3v3h4.500v12l-3 2.500-3 3-3-3-2.500-2.500z" fill="#646464"/></svg>
  <svg class="w-[49px] h-10" viewBox="638 728 49 40"><path d="M652 736.500l19 2 2 13-16-1z" fill="#d7dae8"/><path d="M653.500 738l16 2 1.500 10-12.500-.8z" fill="#1624c4"/><path d="M654.500 738.300l7 .8-1 10.600-4-.3z" fill="#4468eb"/><path d="M659 751h7l3 6-12-1z" fill="#c9c9cf"/><circle cx="669" cy="753.500" r="5.500" fill="#d5d9d0"/><path d="M666 752l3 2-2 3M672 750l-3 2 3 3" stroke="#4b9b45" fill="none"/></svg>
  <svg class="w-[49px] h-10" viewBox="687 728 49 40"><path d="M705 737l18 1v20l-18-1z" fill="#e4ebf8"/><path d="M701 740l5-3v20h-5.500z" fill="#5273bd"/><path d="M708 742l2 7 2-6 2 6 2-7" fill="none" stroke="#2a4d9f" stroke-width="1.600"/><path d="M717 742h5M717 745h5M717 748h5M709 751.500h12M709 754.500h12" stroke="#5d7dc8"/></svg>
  <svg class="w-[49px] h-10" viewBox="736 728 49 40"><path d="M750 739h10l2 2h9v16h-21z" fill="#f8d775"/><path d="M752 740h6v1.500h-6z" fill="#3aa5dd"/><path d="M750 743h21v11h-21z" fill="#ffe394"/><path d="M754 757v-6q0-3 3-3h7q3 0 3 3v6h-3.500v-4h-6v4z" fill="#35a9e1"/><path d="M741 766h40v2h-40z" fill="#aaa"/></svg>
  <svg class="w-[49px] h-10" viewBox="785 728 49 40"><path d="M800 747c1-6 5-9 10-9 6 0 10 4 10 10v2h-13c0 4 3 5.500 6 5.500 2.500 0 4-.5 6-1.500v4c-2 1.200-4.500 1.500-7 1.500-6 0-10-3.500-10-9 0-4 2-7 5-8.500-2 1-5 2-7 5zM807 746h8c0-3-1.500-4.500-4-4.500s-4 2-4 4.500z" fill="#0b78d7" fill-rule="evenodd"/></svg>
  <svg class="w-[49px] h-10" viewBox="834 728 49 40"><defs><linearGradient id="eg"><stop offset="0" stop-color="#2ba7e2"/><stop offset=".5" stop-color="#37c5c3"/><stop offset="1" stop-color="#6bd749"/></linearGradient></defs><path d="M847 748a12 12 0 0 1 12-12l5 10-4 6 9 4a12 12 0 0 1-22-8z" fill="#1a85dc"/><path d="M847.500 745a12 12 0 0 1 23.500 3c0 4-3 6-6.500 6-3 0-5-1-4-2.500 2-4-1-8-5-8-3 0-6 0-8 1.500z" fill="url(#eg)"/><path d="M857 745c-4 5-1 11 5 12 3 .2 4.500-.5 6.500-1.500-1 2-3 3.500-5 4.500-7 1-12-3-11-9 .5-3 2-4.500 4.500-6z" fill="#0c4fa2"/></svg>
  <svg class="w-[50px] h-10" viewBox="883 728 50 40"><circle cx="908" cy="748" r="12" fill="#fbc116"/><path d="M908 748L897.600 742a12 12 0 0 1 20.800 0z" fill="#e33b2e"/><path d="M897.600 742a12 12 0 0 0 9 18l5.500-9.500-9-2z" fill="#2da94f"/><circle cx="908" cy="748" r="5.800" fill="#fff"/><circle cx="908" cy="748" r="4.500" fill="#3b7ded"/><path d="M888 766h40v2h-40z" fill="#aaa"/></svg>
  <div class="w-[48px] h-10 bg-[#3a3a3a] border-b-2 border-[#b5b5b5] flex items-center justify-center pt-[2px]"><div class="w-[22px] h-[22px] bg-[#f2f7fa]"><svg class="w-[22px] h-[22px] [--c1:#4381a8] [--c2:#4381a8] [--c3:#4381a8] [--c4:#4381a8] [--c5:#4381a8] [--c6:#4381a8] [--c7:#4381a8]" viewBox="1.500 1.500 21 21"><use href="#tableau" width="24" height="24"/></svg></div></div>
  <svg class="ml-auto w-[100px] h-10" viewBox="1146 728 100 40" fill="none" stroke="#fff" stroke-width="1.300"><path d="M1153.500 751l5.500-5.500 5.500 5.500M1177.500 744.500h12v8h-12zM1190.500 746.500v4"/><path d="M1179 746h8v5h-8z" fill="#fff" stroke="none"/><g stroke-width="1.100"><path d="M1203 755q0-11 11-12M1206 755.500q0-8 8-9M1209 755.500q0-5 5-6"/></g><circle cx="1212.500" cy="753.500" r="1.500" fill="#fff" stroke="none"/><path d="M1223.500 745.500h2.500l3.500-3.500v12l-3.500-3.500h-2.500zM1231.500 745.500q1.500 2.500 0 5"/><path d="M1233.500 743.500q3 4.500 0 9M1235.800 742q4 6 0 12" stroke="#777"/></svg>
  <div class="w-[62px] mr-1 text-center text-white text-[12px] leading-[18px] tracking-[-0.5px]"><div>13:00</div><div>23-10-2023</div></div>
  <svg class="w-[49px] h-10" viewBox="1312 728 49 40" fill="none" stroke="#fff" stroke-width="1.300"><path d="M1325.500 740.500h15v11.500h-5l-2.500 3-2.500-3h-5z"/></svg>
  <i class="w-px h-10 bg-[#555] mr-1"></i>
</footer>

<div class="absolute left-[1073px] top-[650px] font-['Open_Sans',sans-serif] text-[#999]/70">
  <div class="text-[19px] leading-[25px]">Activate Windows</div>
  <div class="text-[14.300px] leading-[20px]">Go to Settings to activate Windows.</div>
</div>
</body>
</html>
